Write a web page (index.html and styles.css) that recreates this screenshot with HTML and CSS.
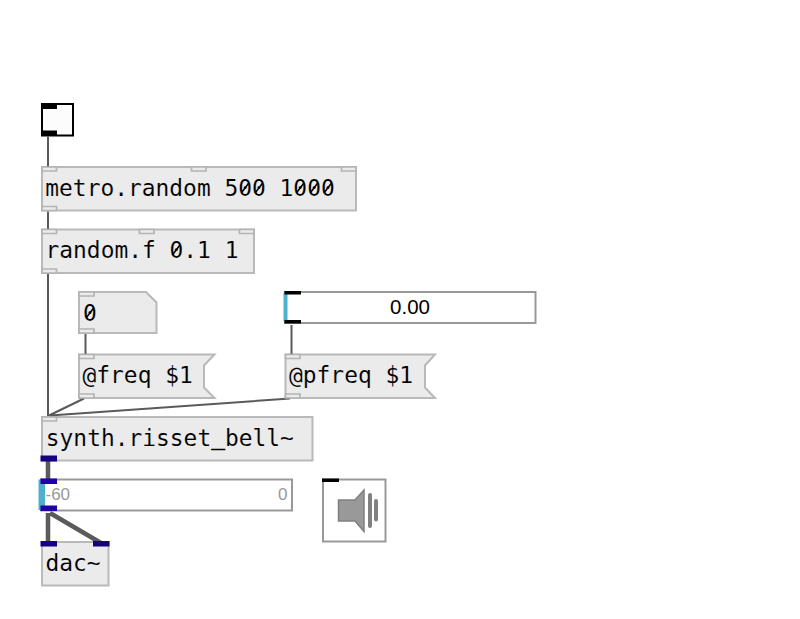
FILE: index.html
```html
<!DOCTYPE html>
<html lang="en">
<head>
<meta charset="utf-8">
<title>synth.risset_bell~</title>
<link rel="stylesheet" href="styles.css">
</head>
<body>
<svg class="patch" width="800" height="619" viewBox="0 0 800 619">
  <!-- toggle -->
  <rect class="toggle" x="42" y="104" width="31" height="31.5"/>
  <path class="ink" d="M41 103.500h16v5.500H41zM41 130.500h16v5.500H41z"/>

  <!-- object boxes -->
  <g class="box">
    <path d="M42 167H356v43.500H42z"/>
    <path d="M42 229.500H254v43.500H42z"/>
    <path d="M79 292h67l10.500 10.500V333H79z"/>
    <path d="M79 354.500h135.500l-10.500 11v22l10.500 10.500H79z"/>
    <path d="M285.500 354.500h149.500l-10 11v22l10 10.500H285.500z"/>
    <path d="M42 417H312.500v43.500H42z"/>
    <path d="M42 542H108.500v43.500H42z"/>
  </g>

  <!-- sliders and the dsp switch -->
  <path class="frame" d="M285 292H535.500v31H285z"/>
  <path class="knob" d="M283.500 292.500h4v29h-4z"/>
  <path class="frame" d="M41 479.500H292v31H41z"/>
  <path class="knob" d="M38.500 479.500h6.500v30.500h-6.500z"/>
  <path class="frame" d="M323 479.500h62.500v62H323z"/>
  <g class="speaker">
    <path d="M338.500 500h16.500l9-10v41.500l-9-10.500h-16.500z"/>
    <path class="wave" d="M370 495v31M376 501v18.500"/>
  </g>

  <!-- cords -->
  <path class="cord" d="M48 136.500V167M48 211.500V229M48 274V416M85.500 334V354M291.500 325V354M84 398.500L49 415.500M290 398.500L50 415.500"/>
  <path class="cord signal" d="M48 461V480M48 513V542M50 513L101 543"/>

  <!-- inlets and outlets -->
  <g class="port">
    <path d="M42 167h14.500v4H42zM191.500 167H206v4H191.500zM341.500 167H356v4H341.500zM42 206.500h14.500v4H42z"/>
    <path d="M42 229.500h14.500v4H42zM139.500 229.500H154v4H139.500zM239.500 229.500H254v4H239.500zM42 269h14.500v4H42z"/>
    <path d="M79 292h15v4H79zM79 329h15v4H79zM79 354.500h15v4H79zM79 394h15v4H79z"/>
    <path d="M285.500 354.500H300v4H285.500zM285.500 394H300v4H285.500zM42 417h14.500v4H42z"/>
  </g>
  <path class="ink" d="M284.500 291h16.500v3.500h-16.500zM284.500 320h16.500v3.500h-16.500zM322 478.500h17v3.500h-17z"/>
  <path class="audio" d="M40.500 455.500h16.500v6h-16.500zM40.500 541h16.500v5.500h-16.500zM93 541h16.500v5.500h-16.500z"/>
  <path class="audio bright" d="M40.500 478.500h16.500v5.500h-16.500zM40.500 505.500h16.500v5.500h-16.500z"/>

  <!-- labels -->
  <g class="code">
    <text x="45.300" y="196">metro.random 500 1000</text>
    <text x="45.500" y="258">random.f 0.1 1</text>
    <text x="83" y="321">0</text>
    <text x="82.500" y="383">@freq $1</text>
    <text x="289" y="383">@pfreq $1</text>
    <text x="45.800" y="446">synth.risset<tspan class="rule" dy="-2">_</tspan><tspan dy="2">bell~</tspan></text>
    <text x="45.500" y="571">dac~</text>
  </g>
  <!-- slashes of the zeros -->
  <path class="slash" d="M241.300 193l7.500-10M255.100 193l7.500-10M296.400 193l7.500-10M310.200 193l7.500-10M324 193l7.500-10M172.400 255l7.500-10M86.100 318l7.500-10"/>
  <text class="value" x="410" y="314">0.00</text>
  <text class="range" x="45.500" y="500">-60</text>
  <text class="range" x="278" y="500">0</text>
</svg>
</body>
</html>
```
FILE: styles.css
```css
body { margin: 0; background: #fff; overflow: hidden; }
.patch { display: block; }
.toggle { fill: #fcfcfc; stroke: #000; stroke-width: 2; }
.ink { fill: #000; }
.box { fill: #ebebeb; stroke: #b9b9b9; stroke-width: 2; }
.frame { fill: #fff; stroke: #999; stroke-width: 2; }
.knob { fill: #4eb0cb; }
.port { fill: #ebebeb; stroke: #b4b4b4; stroke-width: 1.7; }
.cord { fill: none; stroke: #5a5a5a; stroke-width: 2; }
.signal { stroke-width: 4.5; }
.audio { fill: #140080; }
.bright { fill: #2200a8; }
.speaker { fill: #999; stroke: #808080; stroke-width: 1.5; }
.speaker .wave { stroke-width: 4; stroke-linecap: round; }
.code { font: 22.9px "DejaVu Sans Mono", monospace; fill: #000; stroke: #ebebeb; stroke-width: .1; white-space: pre; }
.code .rule { stroke: #000; stroke-width: .4; }
.slash { stroke: #000; stroke-width: 1.5; }
.value, .range { font-family: "Liberation Sans", sans-serif; }
.value { font-size: 20.5px; text-anchor: middle; }
.range { font-size: 17px; fill: #999; }
```
